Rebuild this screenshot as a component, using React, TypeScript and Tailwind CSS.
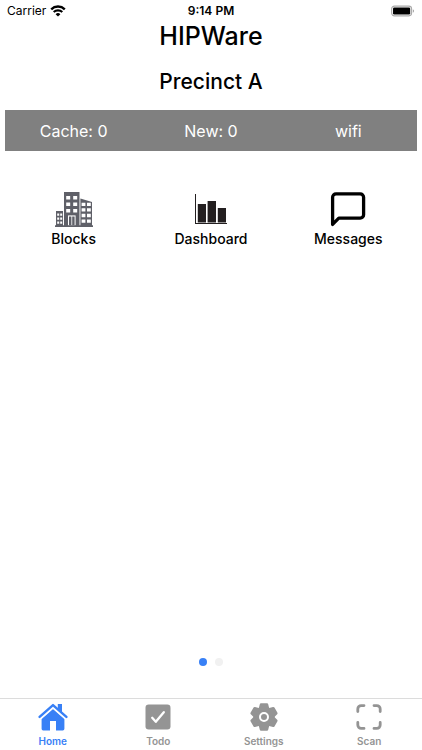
import { useState } from 'react';

interface IconProps {
  className?: string;
}

const WifiIcon = ({ className }: IconProps) => (
  <svg viewBox="0 0 16 12" className={className} fill="none" stroke="currentColor" aria-hidden="true">
    <path d="M1.2 4.3a9.8 9.8 0 0 1 13.6 0" strokeWidth="2.4" />
    <path d="M3.7 7.1a6.2 6.2 0 0 1 8.6 0" strokeWidth="2.1" />
    <path d="M8 11.6 5.6 9.2a3.4 3.4 0 0 1 4.8 0Z" fill="currentColor" stroke="none" />
  </svg>
);

const BatteryIcon = ({ className }: IconProps) => (
  <svg viewBox="0 0 26 12" className={className} aria-hidden="true">
    <rect x="0.7" y="0.7" width="21.6" height="10.6" rx="3" fill="#fff" stroke="#aaa" strokeWidth="1.2" />
    <rect x="2.2" y="2.2" width="18.6" height="7.6" rx="1.4" fill="#000" />
    <path d="M23.7 4.2v3.6a2 2 0 0 0 0-3.6Z" fill="#999" />
  </svg>
);

const BlocksIcon = ({ className }: IconProps) => (
  <svg viewBox="0 0 38 36" className={className} aria-hidden="true">
    <g fill="#5f6068">
      <path d="M9 0h15.5v34H9z" />
      <path d="M1 19h7v15H1z" />
      <path d="M25.4 6.5 37 10v24H25.4z" />
      <path d="M0 33.2h38V35H0z" />
    </g>
    <g fill="#fff">
      <path d="M11.2 4h4v3.6h-4zM18.2 4h4v3.6h-4zM11.2 10.4h4V14h-4zM18.2 10.4h4V14h-4zM11.2 17h4v3.6h-4zM18.2 17h4v3.6h-4z" />
      <path d="M13 23.4h7.6v9.8H13z" />
      <path d="M2.2 21.4h2v2.4h-2zM5.2 21.4h2v2.4h-2zM2.2 25.4h2v2.4h-2zM5.2 25.4h2v2.4h-2zM2.2 29.4h2v2.4h-2zM5.2 29.4h2v2.4h-2z" />
      <path d="M26.6 10.8h3.8V14h-3.8zM32 10.8h3.8V14H32zM26.6 16.2h3.8v3.4h-3.8zM32 16.2h3.8v3.4H32zM26.6 21.8h3.8v3.4h-3.8zM32 21.8h3.8v3.4H32zM26.6 27.4h3.8v3.4h-3.8zM32 27.4h3.8v3.4H32z" />
    </g>
    <path d="M14 24.4h2.4v8.8H14zM17.2 24.4h2.4v8.8h-2.4z" fill="#5f6068" />
  </svg>
);

const DashboardIcon = ({ className }: IconProps) => (
  <svg viewBox="0 0 38 36" className={className} fill="#231f20" aria-hidden="true">
    <path d="M3 2h1v29h31v1H3z" />
    <path d="M5.8 12h8.2v18.6H5.8zM15.6 9h8.4v21.6h-8.4zM25.8 16H34v14.6h-8.2z" />
  </svg>
);

const MessagesIcon = ({ className }: IconProps) => (
  <svg viewBox="0 0 38 36" className={className} fill="none" stroke="#000" strokeWidth="3.3" strokeLinejoin="round" aria-hidden="true">
    <path d="M3.6 32.4V5.2a3.4 3.4 0 0 1 3.4-3.4h24.2a3.4 3.4 0 0 1 3.4 3.4v17.6a3.4 3.4 0 0 1-3.4 3.4H9.8Z" />
  </svg>
);

const HomeIcon = ({ className }: IconProps) => (
  <svg viewBox="0 0 30 28" className={className} fill="currentColor" aria-hidden="true">
    <path d="M15 5.6 3.6 15.4v10.4a1.6 1.6 0 0 0 1.6 1.6H12V18h6v9.4h6.8a1.6 1.6 0 0 0 1.6-1.6V15.4Z" />
    <path d="M19.8 1H24v9l-4.2-3.7Z" />
    <path d="M3 15.9 15 5.4l12 10.5" fill="none" stroke="#fff" strokeWidth="1.2" />
    <path d="M1.6 13.9 15 2.1l13.4 11.8" fill="none" stroke="currentColor" strokeWidth="2.4" strokeLinecap="round" strokeLinejoin="round" />
  </svg>
);

const TodoIcon = ({ className }: IconProps) => (
  <svg viewBox="0 0 30 28" className={className} aria-hidden="true">
    <rect x="2.5" y="1.5" width="25" height="25" rx="3.2" fill="currentColor" />
    <path d="m9.2 14.8 3.6 4 8-9.6" fill="none" stroke="#fff" strokeWidth="2.3" strokeLinecap="round" strokeLinejoin="round" />
  </svg>
);

const TEETH = [0, 60, 120, 180, 240, 300];

const SettingsIcon = ({ className }: IconProps) => (
  <svg viewBox="0 0 30 28" className={className} fill="currentColor" aria-hidden="true">
    <circle cx="15" cy="14" r="10.6" />
    {TEETH.map((angle) => (
      <path
        key={angle}
        d="m9.6 6 1.2-4.8A1.3 1.3 0 0 1 12 .2h6a1.3 1.3 0 0 1 1.2 1L20.4 6Z"
        transform={`rotate(${angle} 15 14)`}
      />
    ))}
    <circle cx="15" cy="14" r="4" fill="none" stroke="#fff" strokeWidth="2" />
  </svg>
);

const ScanIcon = ({ className }: IconProps) => (
  <svg viewBox="0 0 30 28" className={className} fill="none" stroke="currentColor" strokeWidth="2.8" strokeLinecap="round" aria-hidden="true">
    <path d="M3.8 8.6V6a3.4 3.4 0 0 1 3.4-3.4H10" />
    <path d="M20 2.6h2.8A3.4 3.4 0 0 1 26.2 6v2.6" />
    <path d="M26.2 19.4V22a3.4 3.4 0 0 1-3.4 3.4H20" />
    <path d="M10 25.4H7.2A3.4 3.4 0 0 1 3.8 22v-2.6" />
  </svg>
);

const stats = ['Cache: 0', 'New: 0', 'wifi'];

const shortcuts = [
  { id: 'blocks', label: 'Blocks', Icon: BlocksIcon },
  { id: 'dashboard', label: 'Dashboard', Icon: DashboardIcon },
  { id: 'messages', label: 'Messages', Icon: MessagesIcon },
];

const tabs = [
  { id: 'home', label: 'Home', Icon: HomeIcon },
  { id: 'todo', label: 'Todo', Icon: TodoIcon },
  { id: 'settings', label: 'Settings', Icon: SettingsIcon },
  { id: 'scan', label: 'Scan', Icon: ScanIcon },
];

const App = () => {
  const [activeTab, setActiveTab] = useState('home');
  const [page, setPage] = useState(0);

  return (
    <div className="flex min-h-screen flex-col bg-white font-['Inter','Liberation_Sans',sans-serif] text-black">
      {/* Status bar */}
      <div className="grid grid-cols-3 items-center px-[7px] pt-[3px] text-xs leading-4">
        <div className="flex items-center gap-1">
          <span>Carrier</span>
          <WifiIcon className="h-3 w-4" />
        </div>
        <span className="text-center font-semibold">9:14 PM</span>
        <BatteryIcon className="h-3 w-6 justify-self-end" />
      </div>

      {/* Header */}
      <header className="pt-px text-center font-medium">
        <h1 className="text-[25px] leading-8">HIPWare</h1>
        <h2 className="mt-4 text-[21px] leading-7">Precinct A</h2>
      </header>

      {/* Sync stats */}
      <div className="mx-[5px] mt-3.5 grid grid-cols-3 bg-[#808080] pt-[9px] pb-2 text-center text-base leading-6 text-white">
        {stats.map((stat) => (
          <span key={stat}>{stat}</span>
        ))}
      </div>

      {/* Shortcuts */}
      <main className="flex-1 px-[5px] pt-[41px]">
        <div className="grid grid-cols-3">
          {shortcuts.map(({ id, label, Icon }) => (
            <button key={id} type="button" className="flex flex-col items-center">
              <Icon className="h-9 w-[38px]" />
              <span className="mt-px text-sm leading-5 font-medium">{label}</span>
            </button>
          ))}
        </div>
      </main>

      {/* Page dots */}
      <div className="mb-8 flex justify-center gap-2">
        {[0, 1].map((dot) => (
          <button
            key={dot}
            type="button"
            aria-label={`Page ${dot + 1}`}
            onClick={() => setPage(dot)}
            className={`size-2 rounded-full ${page === dot ? 'bg-[#3880f6]' : 'bg-[#f1f1f1]'}`}
          />
        ))}
      </div>

      {/* Tab bar */}
      <nav className="grid grid-cols-4 border-t border-[#dcdcdc] pt-1 pb-px">
        {tabs.map(({ id, label, Icon }) => (
          <button
            key={id}
            type="button"
            onClick={() => setActiveTab(id)}
            className={`flex flex-col items-center gap-0.5 ${activeTab === id ? 'text-[#3880f6]' : 'text-[#949494]'}`}
          >
            <Icon className="h-7 w-[30px]" />
            <span className="text-[10px] leading-4 font-semibold">{label}</span>
          </button>
        ))}
      </nav>
    </div>
  );
};

export default App;
